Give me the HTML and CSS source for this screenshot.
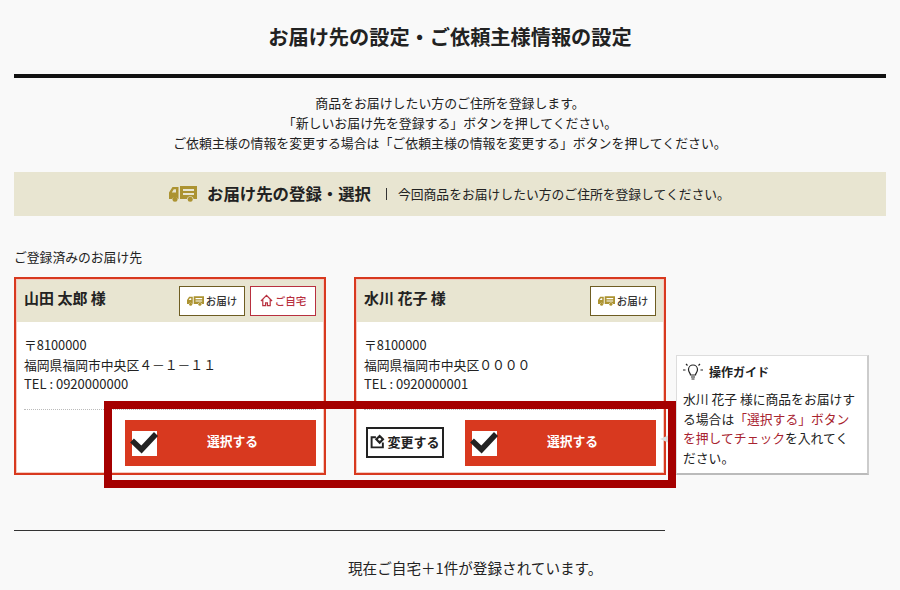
FILE: index.html
```html
<!DOCTYPE html>
<html lang="ja">
<head>
<meta charset="utf-8">
<title>お届け先の設定</title>
<link rel="stylesheet" href="styles.css">
</head>
<body>
<svg class="defs" width="0" height="0" aria-hidden="true">
  <symbol id="truck" viewBox="0 0 28 16">
    <path fill="currentColor" fill-rule="evenodd" d="M0 6.500 3.500 1H9.500V13H9A3.300 3.300 0 0 0 3 13H0zM2.800 6.500H7V3.300H4.800zM11 0H28V13H24.500A3.300 3.300 0 0 0 18 13H11zM14 3V5H25V3zM14 7V9H25V7z"/>
    <circle fill="currentColor" cx="6" cy="13.300" r="2.500"/>
    <circle fill="currentColor" cx="21.200" cy="13.300" r="2.500"/>
  </symbol>
  <symbol id="check" viewBox="0 0 25 25">
    <path fill="none" stroke="#222" stroke-width="5.500" d="M0 9.500l9.500 9L24 3"/>
  </symbol>
</svg>
<main class="page">
  <h1 class="title">お届け先の設定・ご依頼主様情報の設定</h1>
  <div class="intro">
    <p>商品をお届けしたい方のご住所を登録します。</p>
    <p>「新しいお届け先を登録する」ボタンを押してください。</p>
    <p>ご依頼主様の情報を変更する場合は「ご依頼主様の情報を変更する」ボタンを押してください。</p>
  </div>
  <section class="banner">
    <svg class="banner-icon"><use href="#truck"/></svg>
    <h2 class="banner-title">お届け先の登録・選択</h2>
    <span class="banner-note">今回商品をお届けしたい方のご住所を登録してください。</span>
  </section>
  <h3 class="list-label">ご登録済みのお届け先</h3>
  <div class="cards">
    <article class="card">
      <header class="card-head">
        <span class="name">山田 太郎 様</span>
        <span class="tag tag-gold"><svg class="tag-icon"><use href="#truck"/></svg>お届け</span>
        <span class="tag tag-red"><svg class="tag-icon-home" viewBox="0 0 14 14"><path fill="none" stroke="currentColor" stroke-width="1.300" d="M1 7.500 7 1.500l6 6M3 6v6.500h3v-3h2v3h3V6"/></svg>ご自宅</span>
      </header>
      <div class="address">
        <p>〒8100000</p>
        <p>福岡県福岡市中央区４－１－１１</p>
        <p class="tel">TEL : 0920000000</p>
      </div>
      <div class="actions">
        <button class="select"><svg class="check-box"><use href="#check"/></svg>選択する</button>
      </div>
    </article>
    <article class="card">
      <header class="card-head">
        <span class="name">水川 花子 様</span>
        <span class="tag tag-gold"><svg class="tag-icon"><use href="#truck"/></svg>お届け</span>
      </header>
      <div class="address">
        <p>〒8100000</p>
        <p>福岡県福岡市中央区００００</p>
        <p class="tel">TEL : 0920000001</p>
      </div>
      <div class="actions">
        <button class="change"><svg class="change-icon" viewBox="0 0 14 14"><path fill="none" stroke="#222" stroke-width="1.800" d="M5.500 3H1.500v9.500h10.500V8"/><path fill="#222" d="M9 0.500 13.500 5 9 9.500 4.500 5z"/><circle cx="9" cy="5" r="1.300" fill="#fff"/></svg>変更する</button>
        <button class="select"><svg class="check-box"><use href="#check"/></svg>選択する</button>
      </div>
    </article>
    <aside class="guide">
      <h4 class="guide-title"><svg class="bulb" viewBox="0 0 20 20"><path fill="none" stroke="#222" stroke-width="1.200" d="M7.500 13c0-2-2-2.500-2-5.500a4.500 4.500 0 0 1 9 0c0 3-2 3.500-2 5.500zM8 15h4M8.500 17h3"/><path stroke="#222" stroke-width="1.200" d="M0 8h2.500M17.500 8H20M3 2l1.500 1.500M17 2l-1.500 1.500"/></svg>操作ガイド</h4>
      <p class="guide-text">水川 花子 様に商品をお届けする場合は<em>「選択する」ボタンを押してチェック</em>を入れてください。</p>
    </aside>
  </div>
  <div class="frame"></div>
  <hr class="rule">
  <p class="count">現在ご自宅＋1件が登録されています。</p>
</main>
</body>
</html>
```
FILE: styles.css
```css
* { box-sizing: border-box; }
html, body { margin: 0; height: 590px; overflow: hidden; }
body {
  background: #f9f9f9;
  color: #222;
  font-family: "Noto Sans CJK JP", "Liberation Sans", sans-serif;
}
p, h1, h2, h3, h4 { margin: 0; }
.defs { position: absolute; }
#check { overflow: visible; }
.page { position: relative; padding: 0 14px; height: 590px; }
.title {
  height: 78px;
  padding-top: 23px;
  border-bottom: 4px solid #111;
  font-size: 20.200px;
  line-height: 28px;
  font-weight: 700;
  text-align: center;
}
.intro {
  padding-top: 15px;
  font-size: 12.900px;
  line-height: 20px;
  text-align: center;
}
.banner {
  display: flex;
  align-items: center;
  justify-content: center;
  height: 44px;
  margin-top: 19px;
  padding-right: 1px;
  background: #e8e5d1;
}
.banner-icon { width: 28px; height: 16px; color: #ac9331; margin-right: 10px; }
.banner-title { font-size: 16.400px; font-weight: 700; line-height: 24px; padding-bottom: 3px; }
.banner-note {
  margin-left: 15px;
  padding-left: 11px;
  border-left: 1px solid #333;
  font-size: 12.800px;
  line-height: 12px;
}
.list-label {
  margin-top: 32px;
  font-size: 12.800px;
  font-weight: 400;
  line-height: 18px;
}
.cards { display: flex; margin-top: 11px; }
.card {
  display: flex;
  flex-direction: column;
  width: 312px;
  height: 198px;
  margin-right: 28px;
  border: 2px solid #d8391f;
  outline: 1px solid #f5c9bf;
  outline-offset: -3px;
  background: #fff;
}
.card-head {
  display: flex;
  align-items: center;
  gap: 5px;
  height: 43px;
  padding: 0 8px;
  background: #e8e5d1;
}
.name { margin-right: auto; padding-bottom: 6px; font-size: 15px; font-weight: 700; }
.tag {
  display: flex;
  align-items: center;
  justify-content: center;
  height: 30px;
  font-size: 10.500px;
  font-weight: 500;
  background: #fff;
}
.tag-gold { width: 66px; border: 1px solid #6e5d22; color: #333; }
.tag-red { width: 66px; border: 1px solid #b8303f; color: #b8303f; }
.tag-icon { width: 17px; height: 10px; margin-right: 2px; color: #ac9331; }
.tag-icon-home { width: 13px; height: 13px; margin-right: 2px; }
.address {
  padding: 13px 8px 15px;
  font-size: 12.800px;
  line-height: 19.500px;
}
.tel { font-size: 13px; }
.actions {
  display: flex;
  justify-content: flex-end;
  align-items: center;
  gap: 21px;
  margin: 0 8px;
  padding-top: 10px;
  border-top: 1px dotted #bbb;
}
.select {
  position: relative;
  width: 191px;
  height: 46px;
  padding: 0 0 4px 24px;
  border: 0;
  background: #d8391f;
  color: #fff;
  font: 700 12.800px "Noto Sans CJK JP", sans-serif;
}
.check-box {
  position: absolute;
  left: 7px;
  top: 11px;
  width: 25px;
  height: 25px;
  overflow: visible;
  background: #fff;
}
.change {
  display: flex;
  align-items: center;
  justify-content: center;
  gap: 2px;
  width: 78px;
  height: 31px;
  padding: 0 0 2px;
  border: 2px solid #222;
  background: #fff;
  color: #222;
  font: 700 13px "Noto Sans CJK JP", sans-serif;
}
.change-icon { width: 15px; height: 15px; flex: none; }
.guide {
  position: relative;
  align-self: flex-end;
  flex: none;
  width: 193px;
  height: 120px;
  margin-left: -18px;
  padding: 6px 9px 6px 6px;
  border: 1px solid #ddd;
  border-bottom: 2px solid #bbb;
  border-right: 2px solid #ccc;
  background: #fff;
}
.guide::before {
  content: "";
  position: absolute;
  left: -17px;
  top: 76px;
  border: 7px solid transparent;
  border-left: 0;
  border-right: 16px solid #ddd;
}
.guide-title {
  display: flex;
  align-items: center;
  gap: 6px;
  height: 19px;
  font-size: 12px;
  font-weight: 700;
}
.bulb { width: 20px; height: 20px; }
.guide-text {
  margin-top: 8px;
  font-size: 12.800px;
  line-height: 19.500px;
}
.guide-text em { font-style: normal; color: #a8232f; }
.frame {
  position: absolute;
  left: 104px;
  top: 401px;
  width: 572px;
  height: 87px;
  border: 8px solid #a50000;
  pointer-events: none;
}
.rule {
  width: 651px;
  height: 1px;
  margin: 55px 0 0;
  border: 0;
  background: #333;
}
.count {
  margin-top: 26px;
  padding-left: 334px;
  font-size: 14.600px;
  line-height: 22px;
}
```
